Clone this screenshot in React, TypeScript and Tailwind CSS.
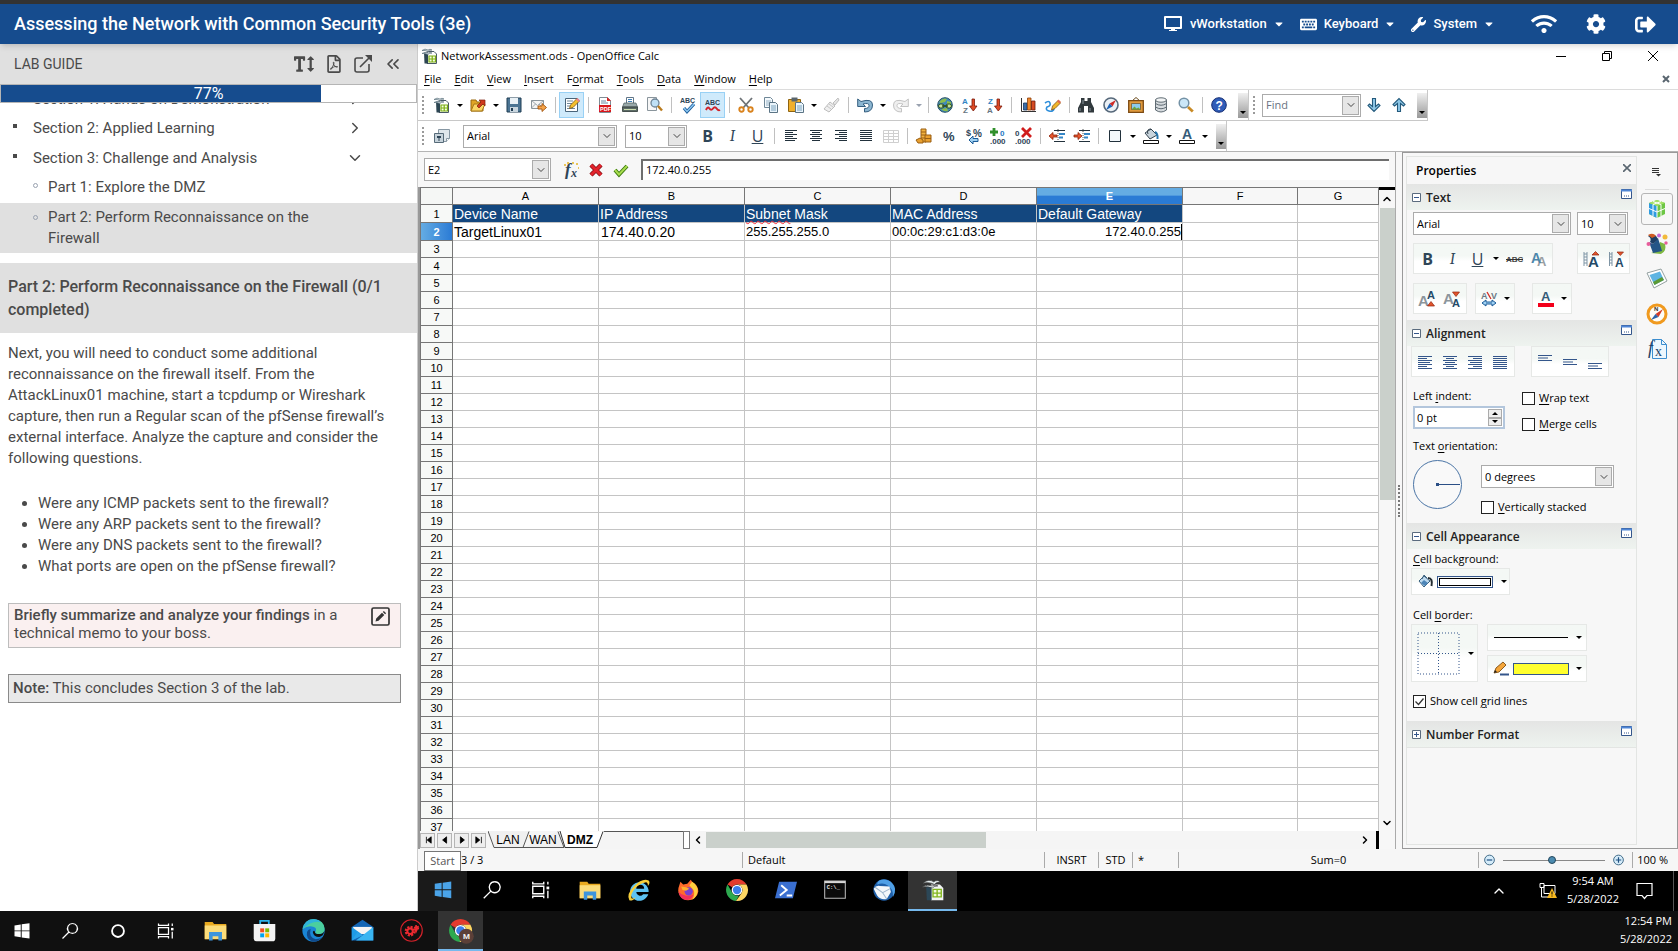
// src/App.tsx

import type { ReactNode } from 'react';
import { FaCaretDown, FaCog, FaKeyboard, FaRegFilePdf, FaSignOutAlt, FaTextHeight, FaWifi, FaWrench } from 'react-icons/fa';
import { ChevronDown, ChevronRight, ChevronsLeft } from 'lucide-react';

const NAVY = '#2f4557';

const lines = (rows: number[][], color: string, gap = 2) =>
  rows.map(([x, w], i) => <rect key={i} x={x} y={2 + i * gap} width={w} height="1" fill={color} />);

// Drawings on a 16 x 16 board
const ICONS: Record<string, ReactNode> = {
  calc: (
    <>
      <path d="M5 3.500h7l2.500 2.500v9.500H5z" fill="#fdfdfd" stroke="#4a5a66" />
      <path d="M2 4.500h4V15.500H2.500z" fill="#2c4552" />
      <path d="M0 2.500q3-2.500 6-.5 2-1.500 4 0-3 0-4 1.500Q3 2 0 2.500zM0 5.500q3-2 6-.5 2-1 4 0-3 0-4 1.500Q3 5 0 5.500z" fill="#dfe8ec" stroke="#5e7480" strokeWidth=".7" />
      <path d="M7 8h6.500v6H7zM10.200 8v6M7 11h6.500" fill="#f4ffe0" stroke="#7cae13" strokeWidth="1.200" />
    </>
  ),
  open: (
    <>
      <path d="M1 14V3h5l1 2h6v9z" fill="#e0a526" stroke="#9a6a10" />
      <path d="M1 14l3-7h11l-3 7z" fill="#fbd766" stroke="#a87818" />
      <path d="M7 9l4-4-2-2h6v6l-2-2-4 4z" fill="#cf3a1c" stroke="#7d1d0b" strokeWidth=".7" />
    </>
  ),
  save: (
    <>
      <path d="M1 1h14v14H1z" fill="#4b7493" stroke="#1f3c52" />
      <path d="M4 1h8v6H4z" fill="#e9f1f6" />
      <path d="M4 10h8v5H4z" fill="#c9d6df" />
      <path d="M5 11h2v3H5z" fill="#1f3c52" />
    </>
  ),
  mail: (
    <>
      <path d="M.5 3.500h12v8H.5z" fill="#f4f4f4" stroke="#8a949b" />
      <path d="M.5 3.500l6 5 6-5M.5 11l4-4M12 11L8 7" fill="none" stroke="#8a949b" strokeWidth=".8" />
      <path d="M7 9h4V6.500l4.500 4-4.500 4V12H7z" fill="#f5a44a" stroke="#a3540b" strokeWidth=".9" />
    </>
  ),
  edit: (
    <>
      <path d="M1.500 1.500h12v13h-12z" fill="#fff" stroke="#48647a" />
      <path d="M3 4h6M3 6.500h5M3 9h3M3 11.500h8" stroke="#6f8798" />
      <path d="M5.500 11.500l1-3.500L13 1.500l2.500 2.500L9 10.500z" fill="#f5c02c" stroke="#7a5313" strokeWidth=".8" />
      <path d="M12 2.500L13.500 1 16 3.500 14.500 5z" fill="#e98291" />
    </>
  ),
  pdf: (
    <>
      <path d="M2.500.5h8l3 3v12h-11z" fill="#fff" stroke="#7f8c95" />
      <path d="M10 0l4 4h-4z" fill="#d22" />
      <path d="M4 4h5M4 6h7" stroke="#6b88a2" />
      <path d="M2 8h12v7H2z" fill="#d8161b" />
      <text x="3" y="13.700" fontSize="5.500" fontWeight="700" fill="#fff" fontFamily="Liberation Sans">PDF</text>
    </>
  ),
  print: (
    <>
      <path d="M4.500.5h7v7h-7z" fill="#fff" stroke="#617587" />
      <path d="M6 2.500h4M6 4.500h4" stroke="#3d7fb5" />
      <path d="M2 6h12l1.500 4H.5z" fill="#9aa9a9" stroke="#4c5c5c" strokeWidth=".7" />
      <path d="M.5 10h15v4.500H.5z" fill="#5d6c66" stroke="#2d3935" strokeWidth=".8" />
      <path d="M2 12.500h12" stroke="#cfe0b0" />
    </>
  ),
  preview: (
    <>
      <path d="M.5.5h9v13h-9z" fill="#f7f7f7" stroke="#8a959c" />
      <circle cx="8" cy="6" r="4" fill="#bfe0f5" stroke="#6d8496" strokeWidth="1.300" />
      <path d="M11 9l4 4.500" stroke="#b97a1c" strokeWidth="2.400" />
    </>
  ),
  spell: (
    <>
      <text x="0" y="6" fontSize="7" fontWeight="700" fill={NAVY} fontFamily="Liberation Sans">ABC</text>
      <path d="M4 11l3 3.500L14 7" fill="none" stroke="#1d5e9c" strokeWidth="3.200" />
      <path d="M4 11l3 3.500L14 7" fill="none" stroke="#8ec8f2" strokeWidth="1.400" />
    </>
  ),
  auto: (
    <>
      <text x="0" y="8" fontSize="7" fontWeight="700" fill={NAVY} fontFamily="Liberation Sans">ABC</text>
      <path d="M1 13q1.700-4 3.400-1.500t3.600 0t3.600 0T15 13" fill="none" stroke="#d2232a" strokeWidth="2" />
    </>
  ),
  cut: (
    <>
      <path d="M2 1l9 10M14 1L5 11" stroke="#6d7276" strokeWidth="1.800" />
      <circle cx="3.500" cy="12.500" r="2.200" fill="none" stroke="#d9821c" strokeWidth="1.900" />
      <circle cx="12.500" cy="12.500" r="2.200" fill="none" stroke="#d9821c" strokeWidth="1.900" />
    </>
  ),
  copy: (
    <>
      <path d="M1.500.5h6l2 2v8h-8z" fill="#f5fafd" stroke="#6f8797" />
      <path d="M3 4h5M3 6h5M3 8h5" stroke="#94b0c4" />
      <path d="M6.500 5.500h6l2 2v8h-8z" fill="#eaf5fc" stroke="#5b7485" />
      <path d="M8 9h5M8 11h5M8 13h5" stroke="#7ba2bd" />
    </>
  ),
  paste: (
    <>
      <path d="M.5 2.500h12v12H.5z" fill="#efaf2c" stroke="#8f6410" />
      <path d="M3.500.5h6v4h-6z" fill="#59656c" />
      <path d="M7.500 5.500h6l2 2v8h-8z" fill="#eaf5fc" stroke="#5b7485" />
      <path d="M9 9h5M9 11h5M9 13h5" stroke="#7ba2bd" />
    </>
  ),
  brush: (
    <>
      <path d="M14 1l1 2-4 5-2-2z" fill="#e5e5e5" stroke="#c0c0c0" />
      <path d="M6 5l5 4-6 6-5-3z" fill="#efefef" stroke="#bdbdbd" />
      <path d="M3 9l4 3M5 7l4 3" stroke="#c6c6c6" />
    </>
  ),
  undo: (
    <path d="M.7 2v7.500H8.500L6 7q6-1.500 6 1.500T7.500 11.500V15q8 0 8-7T4 4.500z" fill="#8cb6d1" stroke="#355f80" strokeWidth="1" />
  ),
  redo: (
    <path d="M15.300 2v7.500H7.500L10 7Q4 5.500 4 8.500t4.500 3V15q-8 0-8-7T12 4.500z" fill="#efefef" stroke="#c3c3c3" strokeWidth="1" />
  ),
  web: (
    <>
      <circle cx="8" cy="8" r="7.300" fill="#3f89bb" stroke="#275064" />
      <path d="M2 5q4-5 8-3l-2 3-4 1zM10 4l4 1v4l-4-2zM4 12l6-1 1 3q-4 1-7-2z" fill="#8dbd4c" />
      <rect x="1.500" y="7" width="5.500" height="4" rx="2" fill="#c3e19a" stroke="#2b4d1e" />
      <rect x="9" y="7" width="5.500" height="4" rx="2" fill="#c3e19a" stroke="#2b4d1e" />
      <path d="M5 9h6" stroke="#2b4d1e" strokeWidth="1.500" />
    </>
  ),
  az: (
    <>
      <text x="0" y="7" fontSize="8" fontWeight="700" fill="#3385c4" fontFamily="Liberation Sans">A</text>
      <text x="1" y="15.500" fontSize="8" fontWeight="700" fill="#66757f" fontFamily="Liberation Sans">Z</text>
      <path d="M10 2h2.500v7H15l-3.700 5L7.500 9H10z" fill="#dd4a25" stroke="#7b1b0a" strokeWidth=".8" />
    </>
  ),
  za: (
    <>
      <text x="1" y="7" fontSize="8" fontWeight="700" fill="#3385c4" fontFamily="Liberation Sans">Z</text>
      <text x="0" y="15.500" fontSize="8" fontWeight="700" fill="#66757f" fontFamily="Liberation Sans">A</text>
      <path d="M10 2h2.500v7H15l-3.700 5L7.500 9H10z" fill="#dd4a25" stroke="#7b1b0a" strokeWidth=".8" />
    </>
  ),
  chart: (
    <>
      <path d="M1.500 1v13.500H16" fill="none" stroke="#333" />
      <path d="M3.500 6h3.500v7H3.500z" fill="#3c6ea9" stroke="#16375f" strokeWidth=".8" />
      <path d="M7.500 1h3.500v12H7.500z" fill="#f0872a" stroke="#8c3d0a" strokeWidth=".8" />
      <path d="M11.500 4h3.500v9h-3.500z" fill="#d64a22" stroke="#6d1d0b" strokeWidth=".8" />
    </>
  ),
  draw: (
    <>
      <path d="M0 6q4-3 5 0t-3 4q-2 3 2 4t5-2" fill="none" stroke="#2d8edb" strokeWidth="1.600" />
      <path d="M6.500 13l1-4L13 3.500 15.500 6 10 11.500z" fill="#f2b62a" stroke="#80531a" strokeWidth=".8" />
      <path d="M12 4.500l1.500-2L16 5l-1.500 1.500z" fill="#e06a4f" />
    </>
  ),
  find: (
    <>
      <path d="M3 1h3.500v3h3V1H13v4l3 6v4.500h-6V9H6v6.500H0V11l3-6z" fill="#31393d" />
      <path d="M2 11v3M12 11v3M5 3v4" stroke="#8b979e" />
    </>
  ),
  compass: (
    <>
      <circle cx="8" cy="8" r="7" fill="#eaf0f5" stroke="#56687a" strokeWidth="1.600" />
      <path d="M13 3L9.500 9.500 6.500 6.500z" fill="#cf2b26" />
      <path d="M3 13l3.500-6.500 3 3z" fill="#1c62b6" />
    </>
  ),
  gallery: (
    <>
      <path d="M4 4l4-3.500L12 4" fill="none" stroke="#6a4a1b" />
      <path d="M.7 3.700h14.600v11.600H.7z" fill="#e19a3c" stroke="#7c4a12" strokeWidth="1.300" />
      <path d="M3.500 6.500h9v6h-9z" fill="#8ccbec" stroke="#5e3d12" strokeWidth=".6" />
      <path d="M3.500 12.500l3-3 2 2 2-1 2 2z" fill="#6ea53a" />
    </>
  ),
  db: (
    <>
      <path d="M2.500 3v10q5.500 4 11 0V3z" fill="#d5dade" stroke="#5f6b73" />
      <ellipse cx="8" cy="3" rx="5.500" ry="2.200" fill="#f2f4f5" stroke="#5f6b73" />
      <path d="M2.500 6.500q5.500 3.500 11 0M2.500 10q5.500 3.500 11 0" fill="none" stroke="#5f6b73" />
    </>
  ),
  zoom: (
    <>
      <circle cx="6" cy="6" r="4.800" fill="#cbe7f8" stroke="#7391a5" strokeWidth="1.500" />
      <path d="M10 10l4.800 4.500" stroke="#c88a25" strokeWidth="2.800" />
    </>
  ),
  help: (
    <>
      <circle cx="8" cy="8" r="7.300" fill="#2f5cb8" stroke="#142d73" />
      <text x="4.500" y="12.500" fontSize="12" fontWeight="700" fill="#fff" fontFamily="Liberation Sans">?</text>
    </>
  ),
  styles: (
    <>
      <path d="M4.500 1.500h11v9l-3 3h-8z" fill="#dfe6eb" stroke="#8797a3" />
      <path d="M12.500 13.500v-3h3" fill="#fff" stroke="#8797a3" />
      <path d="M.5 5.500h9v9h-9z" fill="#c6d2da" stroke="#566a78" />
      <path d="M3 8h4v2H5.500v3h-1v-3H3z" fill="#2f4557" />
    </>
  ),
  left: lines([[2, 12], [2, 8], [2, 12], [2, 8], [2, 12], [2, 10]], '#22313c'),
  center: lines([[2, 12], [4, 8], [2, 12], [4, 8], [2, 12], [4, 8]], '#22313c'),
  right: lines([[2, 12], [6, 8], [2, 12], [6, 8], [2, 12], [6, 8]], '#22313c'),
  justify: lines([[2, 12], [2, 12], [2, 12], [2, 12], [2, 12], [2, 12]], '#22313c'),
  merge: (
    <path d="M.5 2.500h15v12H.5zM.5 5.500h15M.5 8.500h15M.5 11.500h15M5.500 2.500v12M10.500 2.500v12" fill="none" stroke="#cfcfcf" />
  ),
  coins: (
    <>
      <path d="M5 1h5v13H5z" fill="#f1b23e" stroke="#9a5f12" />
      <path d="M5 4h5M5 7h5M5 10h5" stroke="#9a5f12" />
      <path d="M0 12l4-2 3 2v3H2zM9 7h6v7H9z" fill="#e9a02f" stroke="#9a5f12" />
      <path d="M9 10.500h6" stroke="#9a5f12" />
    </>
  ),
  percent: (
    <text x="2" y="13" fontSize="13" fontWeight="700" fill={NAVY} fontFamily="Liberation Sans">%</text>
  ),
  currency: (
    <>
      <text x="0" y="7.500" fontSize="9" fontWeight="700" fill={NAVY} fontFamily="Liberation Sans">$</text>
      <text x="7" y="8.500" fontSize="10" fontWeight="700" fill={NAVY} fontFamily="Liberation Sans">%</text>
      <path d="M3 12l4-4v2.500h5v3H7V16z" fill="#9fd0f2" stroke="#1b5b97" />
    </>
  ),
  addDec: (
    <>
      <path d="M3 0v8M-1 4h8" stroke="#31902b" strokeWidth="2.800" />
      <text x="9" y="8" fontSize="8" fontWeight="700" fill="#2577c2" fontFamily="Liberation Sans">0</text>
      <text x="-1" y="16" fontSize="8" fontWeight="700" fill={NAVY} fontFamily="Liberation Sans">.000</text>
    </>
  ),
  delDec: (
    <>
      <text x="-1" y="8" fontSize="8" fontWeight="700" fill={NAVY} fontFamily="Liberation Sans">0</text>
      <path d="M6 0l9 9M15 0L6 9" stroke="#d01c1c" strokeWidth="2.800" />
      <text x="-1" y="16" fontSize="8" fontWeight="700" fill={NAVY} fontFamily="Liberation Sans">.000</text>
    </>
  ),
  outdent: (
    <>
      <path d="M9 1v14" stroke="#555" strokeDasharray="1 1" />
      <path d="M5 2.500h11M5 13.500h11" stroke="#22313c" />
      <path d="M10 6h6M10 9.500h4" stroke="#3587c7" strokeWidth="2" />
      <path d="M0 8l4-3.500V7h4v2H4v2.500z" fill="#e8572e" stroke="#8c2109" strokeWidth=".8" />
    </>
  ),
  indent: (
    <>
      <path d="M9 1v14" stroke="#555" strokeDasharray="1 1" />
      <path d="M5 2.500h11M5 13.500h11" stroke="#22313c" />
      <path d="M10 6h6M10 9.500h4" stroke="#3587c7" strokeWidth="2" />
      <path d="M8 8L4 4.500V7H0v2h4v2.500z" fill="#e8572e" stroke="#8c2109" strokeWidth=".8" />
    </>
  ),
  frame: <path d="M2.500 2.500h11v11h-11z" fill="#f3f8fb" stroke="#22313c" />,
  fill: (
    <>
      <path d="M2 5l6-4 6 6-7 4z" fill="#c8d4dc" stroke="#33424e" />
      <path d="M5 6q-2-5 3-5" fill="none" stroke="#33424e" />
      <path d="M12 4q3 1 2.500 7" fill="none" stroke="#2776ad" strokeWidth="2" />
      <path d="M.5 12.500h15v3H.5z" fill="#fff" stroke="#111" />
    </>
  ),
  fontColor: (
    <>
      <text x="3" y="11" fontSize="14" fontWeight="700" fill="#355b78" fontFamily="Liberation Sans">A</text>
      <path d="M.5 12.500h15v3H.5z" fill="#fff" stroke="#111" />
    </>
  ),
  fontRed: (
    <>
      <text x="3" y="10" fontSize="13" fontWeight="700" fill="#355b78" fontFamily="Liberation Sans">A</text>
      <path d="M0 12h16v4H0z" fill="#f3001b" />
    </>
  ),
  fx: (
    <>
      <text x="2" y="13" fontSize="17" fontStyle="italic" fontWeight="700" fill={NAVY} fontFamily="Liberation Serif">f</text>
      <text x="8" y="15" fontSize="12" fontStyle="italic" fontWeight="700" fill={NAVY} fontFamily="Liberation Serif">x</text>
      <path d="M1 3h2M4 1h2M9 1h2M13 2h2M15 6h1" stroke="#e8b623" strokeWidth="1.500" />
    </>
  ),
  cancel: (
    <>
      <path d="M3 3l10 10M13 3L3 13" stroke="#7f0f14" strokeWidth="4.500" />
      <path d="M3 3l10 10M13 3L3 13" stroke="#e2232c" strokeWidth="3" />
    </>
  ),
  accept: (
    <>
      <path d="M2 8l4 4.500L14 4" fill="none" stroke="#3c7b0f" strokeWidth="4" />
      <path d="M2 8l4 4.500L14 4" fill="none" stroke="#a8dc4e" strokeWidth="2" />
    </>
  ),
  down: <path d="M6.500 1.500h3v8l3-2.500 1.500 1.500L8 14.500 2 8.500 3.500 7l3 2.500z" fill="#8ec8e8" stroke="#245a7c" strokeWidth="1.100" />,
  up: <path d="M6.500 14.500h3v-8l3 2.500L14 7.500 8 1.500 2 7.500 3.500 9l3-2.500z" fill="#8ec8e8" stroke="#245a7c" strokeWidth="1.100" />,
  strike: (
    <>
      <text x="0" y="10.500" fontSize="8" fontWeight="700" fill="#444" fontFamily="Liberation Sans">ABC</text>
      <path d="M0 8.500h17" stroke="#333" />
    </>
  ),
  shadow: (
    <>
      <text x="6" y="15" fontSize="13" fontWeight="700" fill="#9a9fa3" fontFamily="Liberation Sans">A</text>
      <text x="0" y="12" fontSize="14" fontWeight="700" fill="#4d87ab" fontFamily="Liberation Sans">A</text>
    </>
  ),
  grow: (
    <>
      <path d="M1 1v14M4 1v14M1 3h3M1 6h3M1 9h3M1 12h3" fill="none" stroke="#7f95a5" />
      <text x="5" y="15.500" fontSize="15" fontWeight="700" fill="#244a68" fontFamily="Liberation Sans">A</text>
      <path d="M9 4l3.500-3.500L16 4z" fill="#e2552d" stroke="#8f240d" strokeWidth=".7" />
    </>
  ),
  shrink: (
    <>
      <path d="M1.500 1v14M4 1v14M1.500 3H4M1.500 6H4M1.500 9H4M1.500 12H4" fill="none" stroke="#7f95a5" />
      <text x="7" y="15.500" fontSize="12" fontWeight="700" fill="#244a68" fontFamily="Liberation Sans">A</text>
      <path d="M9 1h6.500l-3.200 3.500z" fill="#e2552d" stroke="#8f240d" strokeWidth=".7" />
    </>
  ),
  sup: (
    <>
      <text x="-1" y="14.500" fontSize="15" fontWeight="700" fill="#8c959c" fontFamily="Liberation Sans">A</text>
      <text x="8" y="8" fontSize="11" fontWeight="700" fill="#244a68" fontFamily="Liberation Sans">A</text>
      <path d="M8.500 15l3.500-4.500 3.500 4.500z" fill="#e2552d" stroke="#8f240d" strokeWidth=".7" />
    </>
  ),
  sub: (
    <>
      <text x="-1" y="12.500" fontSize="15" fontWeight="700" fill="#8c959c" fontFamily="Liberation Sans">A</text>
      <text x="8" y="15.500" fontSize="11" fontWeight="700" fill="#244a68" fontFamily="Liberation Sans">A</text>
      <path d="M8.500 1h7l-3.500 4.500z" fill="#e2552d" stroke="#8f240d" strokeWidth=".7" />
    </>
  ),
  spacing: (
    <>
      <text x="0" y="8" fontSize="9" fontWeight="700" fill="#6b7a85" fontFamily="Liberation Sans">A</text>
      <text x="10" y="8" fontSize="9" fontWeight="700" fill="#6b7a85" fontFamily="Liberation Sans">V</text>
      <path d="M6 1l4 7" stroke="#d42a22" strokeWidth="1.300" />
      <path d="M1 12l4-3v2h6V9l4 3-4 3v-2H5v2z" fill="#9fd0f2" stroke="#1b5b97" />
    </>
  ),
  bLeft: lines([[1, 14], [1, 9], [1, 14], [1, 12], [1, 14], [1, 9], [1, 14]], '#34568b'),
  bCenter: lines([[1, 14], [4, 8], [1, 14], [3, 10], [1, 14], [4, 8], [1, 14]], '#34568b'),
  bRight: lines([[1, 14], [6, 9], [1, 14], [3, 12], [1, 14], [6, 9], [1, 14]], '#34568b'),
  bJustify: lines([[1, 14], [1, 14], [1, 14], [1, 14], [1, 14], [1, 14], [1, 14]], '#34568b'),
  vTop: <path d="M1 1.500h14M1 4h10M1 6.500h14" stroke="#34568b" />,
  vMid: <path d="M1 5.500h14M1 8h10M1 10.500h14" stroke="#34568b" />,
  vBottom: <path d="M1 9.500h14M1 12h10M1 14.500h14" stroke="#34568b" />,
  bucket: (
    <>
      <path d="M2 7l5-5 6 5-6 6z" fill="#bcd9ee" stroke="#3a617f" />
      <path d="M5 5l2-4 3 3" fill="none" stroke="#3a617f" />
      <path d="M11 4q5 0 3.500 8" fill="none" stroke="#222b31" strokeWidth="2" />
      <path d="M4 9l4 3 3-3-4-3z" fill="#4d86b8" />
    </>
  ),
  pencil: (
    <>
      <path d="M1 12l2-5L10 1l3 3-7 7z" fill="#f4a63a" stroke="#7d4e12" strokeWidth=".9" />
      <path d="M1 12l1-3 2 2z" fill="#222" />
      <path d="M7 12.500h9v2H7z" fill="#34568b" />
    </>
  ),
};

function Ico({ n, s = 'size-4' }: { n: string; s?: string }) {
  return (
    <svg viewBox="0 0 16 16" className={`${s} shrink-0 overflow-visible`} aria-hidden="true">
      {ICONS[n]}
    </svg>
  );
}

function Tool({ n, active = false }: { n: string; active?: boolean }) {
  return (
    <button
      type="button"
      aria-label={n}
      className={`flex h-[26px] w-[25px] shrink-0 items-center justify-center border ${active ? 'border-[#99d1f5] bg-[#cfeafb]' : 'border-transparent'}`}
    >
      <Ico n={n} />
    </button>
  );
}

function Letter({ children, className }: { children: ReactNode; className: string }) {
  return (
    <button type="button" className={`flex h-[26px] w-[25px] shrink-0 items-center justify-center text-base leading-4 text-[#2f4557] ${className}`}>
      {children}
    </button>
  );
}

function Drop({ muted = false }: { muted?: boolean }) {
  return (
    <button type="button" aria-label="More" className="flex h-6 w-[11px] shrink-0 items-center justify-center">
      <span className={`border-x-[3px] border-t-[3px] border-x-transparent ${muted ? 'border-t-gray-400' : 'border-t-black'}`} />
    </button>
  );
}

const Sep = () => (
  <span className="flex w-2 shrink-0 justify-center">
    <span className="h-4 w-px bg-[#c0c0c0]" />
  </span>
);

const Grip = () => <span className="ml-1 h-[18px] w-0 shrink-0 border-l-2 border-dotted border-[#9a9a9a]" />;

const EndCap = () => (
  <span className="flex h-[25px] w-[10px] shrink-0 items-end justify-center bg-linear-to-b from-[#f0f0f0] to-[#9a9a9a] pb-1">
    <span className="border-x-[3px] border-t-[3px] border-x-transparent border-t-black" />
  </span>
);

function Combo({ label, value, className, gray = false }: { label: string; value: string; className: string; gray?: boolean }) {
  return (
    <span className={`relative block h-[23px] shrink-0 ${className}`}>
      <select
        aria-label={label}
        className={`size-full appearance-none border border-[#ababab] bg-white pl-[3px] ${gray ? 'text-gray-500' : 'text-black'}`}
      >
        <option>{value}</option>
      </select>
      <span className="pointer-events-none absolute inset-y-[2px] right-[2px] flex w-[17px] items-center justify-center border border-[#ababab] bg-[#e6e6e6]">
        <ChevronDown className="size-3 text-[#444]" />
      </span>
    </span>
  );
}

function Accel({ text, at = 0 }: { text: string; at?: number }) {
  return (
    <>
      {text.slice(0, at)}
      <span className="underline underline-offset-2">{text[at]}</span>
      {text.slice(at + 1)}
    </>
  );
}

/* ---------- top bar ---------- */

const headerMenus = [
  {
    name: 'vWorkstation',
    icon: (
      <svg viewBox="0 0 20 16" className="h-4 w-5">
        <path d="M2 1h16v11H2z" fill="none" stroke="#fff" strokeWidth="2" strokeLinejoin="round" />
        <path d="M8 12h4v2h2v1H6v-1h2z" fill="#fff" />
      </svg>
    ),
  },
  { name: 'Keyboard', icon: <FaKeyboard className="size-[17px]" /> },
  { name: 'System', icon: <FaWrench className="size-[15px]" /> },
];

function Header() {
  return (
    <header className="relative z-10 flex h-11 shrink-0 items-center border-t-4 border-[#333] bg-[#164c8e] pr-[22px] pl-[14px] text-white shadow-md">
      <h1 className="text-lg leading-6 font-medium">Assessing the Network with Common Security Tools (3e)</h1>
      <nav className="ml-auto flex items-center gap-[15px] text-[13px] font-medium">
        {headerMenus.map((m) => (
          <button key={m.name} type="button" className="flex items-center">
            {m.icon}
            <span className="ml-[7px]">{m.name}</span>
            <FaCaretDown className="ml-[6px] size-3" />
          </button>
        ))}
      </nav>
      <div className="ml-9 flex items-center gap-[29px]">
        <button type="button" aria-label="Connection"><FaWifi className="size-[26px]" /></button>
        <button type="button" aria-label="Settings"><FaCog className="size-5" /></button>
        <button type="button" aria-label="Exit"><FaSignOutAlt className="size-[21px]" /></button>
      </div>
    </header>
  );
}

/* ---------- lab guide ---------- */

const questions = [
  'Were any ICMP packets sent to the firewall?',
  'Were any ARP packets sent to the firewall?',
  'Were any DNS packets sent to the firewall?',
  'What ports are open on the pfSense firewall?',
];

function LabGuide() {
  return (
    <aside className="flex w-[418px] shrink-0 flex-col overflow-hidden border-r border-[#ccc] bg-white text-[15px] leading-[21px] text-[#4a4a4a]">
      <div className="flex h-10 shrink-0 items-center bg-[#e0e0e0] pr-[14px] pl-[14px]">
        <h2 className="text-sm">LAB GUIDE</h2>
        <div className="ml-auto flex items-center gap-[11px]">
          <button type="button" aria-label="Text size"><FaTextHeight className="size-5" /></button>
          <button type="button" aria-label="Export PDF"><FaRegFilePdf className="size-[18px]" /></button>
          <button type="button" aria-label="Open in new window">
            <svg viewBox="0 0 18 18" className="size-[18px]" fill="none" stroke="#4a4a4a" strokeWidth="1.600">
              <path d="M9 3H3q-2 0-2 2v10q0 2 2 2h10q2 0 2-2V9M6 12L16 2" />
              <path d="M11 0h7v7z" fill="#4a4a4a" stroke="none" />
            </svg>
          </button>
          <button type="button" aria-label="Collapse"><ChevronsLeft className="size-5" /></button>
        </div>
      </div>
      <div className="relative h-[19px] shrink-0 border border-[#b5b5b5] bg-white">
        <div className="h-full bg-[#164c8e]" style={{ width: '77%' }} />
        <span className="absolute inset-0 flex items-center justify-center text-base text-white">77%</span>
      </div>

      <div className="flex-1 overflow-hidden">
        <ul className="-mt-[18px]">
          {['Section 1: Hands-on Demonstration', 'Section 2: Applied Learning', 'Section 3: Challenge and Analysis'].map((s, i) => (
            <li key={s} className={`flex items-center pr-[53px] pl-[13px] ${i === 0 ? 'h-7' : 'h-[30px]'}`}>
              <span className="mb-1 size-1 bg-[#4a4a4a]" />
              <a href="#" className="ml-4">{s}</a>
              {i < 2 ? <ChevronRight className="ml-auto size-[18px]" /> : <ChevronDown className="ml-auto size-[18px]" />}
            </li>
          ))}
          <li className="flex h-[30px] items-center pb-px pl-[33px]">
            <span className="mb-1 size-[5px] rounded-full border border-gray-400" />
            <a href="#" className="ml-[10px]">Part 1: Explore the DMZ</a>
          </li>
          <li className="flex bg-[#e0e0e0] py-1 pr-[80px] pl-[33px]">
            <span className="mt-2 size-[5px] shrink-0 rounded-full border border-gray-400" />
            <a href="#" className="ml-[10px]">Part 2: Perform Reconnaissance on the Firewall</a>
          </li>
        </ul>

        <h3 className="mt-[10px] bg-[#e0e0e0] px-2 py-3 text-base leading-[23px] font-medium">
          Part 2: Perform Reconnaissance on the Firewall (0/1 completed)
        </h3>
        <p className="mt-[10px] pr-6 pl-2">
          Next, you will need to conduct some additional reconnaissance on the firewall itself. From the AttackLinux01
          machine, start a tcpdump or Wireshark capture, then run a Regular scan of the pfSense firewall’s external
          interface. Analyze the capture and consider the following questions.
        </p>
        <ul className="mt-6 list-disc pl-[38px]">
          {questions.map((q) => (
            <li key={q}>{q}</li>
          ))}
        </ul>
        <div className="mt-[26px] mr-4 ml-2 flex border border-[#bdbdbd] bg-[#faf0f0] pt-[2px] pr-[10px] pb-[5px] pl-[5px] leading-[18px]">
          <p className="flex-1 pr-8">
            <b className="font-medium">Briefly summarize and analyze your findings</b> in a technical memo to your boss.
          </p>
          <button type="button" aria-label="Write answer" className="flex h-5 items-center">
            <svg viewBox="0 0 19 19" className="size-[19px]">
              <rect x="1" y="1" width="17" height="17" rx="1.500" fill="none" stroke="#333" strokeWidth="1.700" />
              <path d="M4.500 14.500l.7-3L11 5.700l2.300 2.300-5.800 5.800zM11.800 5l1.100-1 2.200 2.200-1 1z" fill="#333" />
            </svg>
          </button>
        </div>
        <p className="mt-[26px] mr-4 ml-2 border border-[#8a8a8a] bg-[#e9e9e9] px-1 py-[3px]">
          <b className="font-medium">Note:</b> This concludes Section 3 of the lab.
        </p>
      </div>
    </aside>
  );
}

/* ---------- spreadsheet window ---------- */

const menus: [string, number][] = [
  ['File', 0], ['Edit', 0], ['View', 0], ['Insert', 0], ['Format', 1], ['Tools', 0], ['Data', 0], ['Window', 0], ['Help', 0],
];

function TitleAndMenu() {
  return (
    <>
      <div className="flex h-6 shrink-0 items-center bg-white pr-5 pl-1">
        <Ico n="calc" />
        <span className="ml-[3px]">NetworkAssessment.ods - OpenOffice Calc</span>
        <div className="ml-auto flex items-center gap-9">
          <button type="button" aria-label="Minimize"><svg className="size-[10px]" viewBox="0 0 10 10"><path d="M0 5.500h10" stroke="#000" /></svg></button>
          <button type="button" aria-label="Restore"><svg className="size-[10px]" viewBox="0 0 10 10"><path d="M.5 2.500h7v7h-7zM2.500 2.500v-2h7v7h-2" fill="none" stroke="#000" /></svg></button>
          <button type="button" aria-label="Close"><svg className="size-[10px]" viewBox="0 0 10 10"><path d="M0 0l10 10M10 0L0 10" stroke="#000" /></svg></button>
        </div>
      </div>
      <div className="flex h-[22px] shrink-0 items-center gap-[13px] border-b border-[#dcdcdc] bg-white pr-2 pl-[6px]">
        {menus.map(([m, at]) => (
          <button key={m} type="button"><Accel text={m} at={at} /></button>
        ))}
        <button type="button" aria-label="Close document" className="ml-auto">
          <svg className="size-2" viewBox="0 0 8 8"><path d="M1 1l6 6M7 1L1 7" stroke="#5a6670" strokeWidth="2" /></svg>
        </button>
      </div>
    </>
  );
}

function Toolbars() {
  return (
    <>
      <div className="flex h-[31px] shrink-0">
        <div className="flex items-center border-r border-b border-[#c8c8c8]">
          <Grip />
          <span className="w-[5px]" />
          <Tool n="calc" /><Drop /><Tool n="open" /><Drop /><Tool n="save" /><Tool n="mail" /><Sep />
          <Tool n="edit" active /><Sep />
          <Tool n="pdf" /><Tool n="print" /><Tool n="preview" /><Sep />
          <Tool n="spell" /><Tool n="auto" active /><Sep />
          <Tool n="cut" /><Tool n="copy" /><Tool n="paste" /><Drop /><Tool n="brush" /><Sep />
          <Tool n="undo" /><Drop /><Tool n="redo" /><Drop muted /><Sep />
          <Tool n="web" /><Tool n="az" /><Tool n="za" /><Sep />
          <Tool n="chart" /><Tool n="draw" /><Sep />
          <Tool n="find" /><Tool n="compass" /><Tool n="gallery" /><Tool n="db" /><Tool n="zoom" /><Sep />
          <Tool n="help" />
          <span className="w-[7px]" />
          <EndCap />
        </div>
        <div className="flex items-center border-r border-b border-[#c8c8c8]">
          <Grip />
          <Combo label="Find" value="Find" gray className="ml-[7px] w-[99px]" />
          <Tool n="down" /><Tool n="up" />
          <span className="w-[6px]" />
          <EndCap />
        </div>
      </div>
      <div className="flex h-[31px] shrink-0 border-b border-[#b4b4b4]">
        <div className="flex items-center border-r border-[#c8c8c8]">
          <Grip />
          <span className="w-[5px]" />
          <Tool n="styles" />
          <Combo label="Font name" value="Arial" className="ml-[9px] w-[154px]" />
          <Combo label="Font size" value="10" className="mr-2 ml-2 w-[62px]" />
          <Letter className="font-bold">B</Letter>
          <Letter className="font-serif italic">I</Letter>
          <Letter className="underline">U</Letter><Sep />
          <Tool n="left" /><Tool n="center" /><Tool n="right" /><Tool n="justify" /><Tool n="merge" /><Sep />
          <Tool n="coins" /><Tool n="percent" /><Tool n="currency" /><Tool n="addDec" /><Tool n="delDec" /><Sep />
          <Tool n="outdent" /><Tool n="indent" /><Sep />
          <Tool n="frame" /><Drop /><Tool n="fill" /><Drop /><Tool n="fontColor" /><Drop />
          <span className="w-[6px]" />
          <EndCap />
        </div>
      </div>
    </>
  );
}

const cols = ['A', 'B', 'C', 'D', 'E', 'F', 'G'];
const headings = ['Device Name', 'IP Address', 'Subnet Mask', 'MAC Address', 'Default Gateway'];
const record = ['TargetLinux01', '174.40.0.20', '255.255.255.0', '00:0c:29:c1:d3:0e', '172.40.0.255'];
const cell = 'border-r border-b border-[#c4c4c4] p-0';

function Grid() {
  return (
    <table className="w-full table-fixed border-separate border-spacing-0 bg-white font-['Liberation_Sans',sans-serif] text-sm leading-4">
      <colgroup>
        <col className="w-[33px]" />
        <col className="w-[146px]" /><col className="w-[146px]" /><col className="w-[146px]" />
        <col className="w-[146px]" /><col className="w-[146px]" /><col className="w-[115px]" />
        <col />
      </colgroup>
      <thead className="text-[11px]">
        <tr className="h-[18px]">
          <th className="border border-[#767676] bg-[#f5f7f5] p-0" />
          {cols.map((c) => (
            <th
              key={c}
              className={`border-y border-r border-[#767676] p-0 ${c === 'E' ? 'bg-linear-to-b from-[#64ace3] from-45% to-[#2a7bd5] to-50% font-bold text-white' : 'bg-[#f7f7f7] font-normal'}`}
            >
              {c}
            </th>
          ))}
        </tr>
      </thead>
      <tbody>
        {Array.from({ length: 37 }, (_, i) => i + 1).map((r) => (
          <tr key={r} className={r < 3 ? 'h-[18px]' : 'h-[17px]'}>
            <th
              scope="row"
              className={`border-x border-b border-[#767676] p-0 text-[11px] leading-[14px] ${r === 2 ? 'bg-linear-to-r from-[#64ace3] to-[#2a7bd5] font-bold text-white' : 'bg-[#f7f9f7] font-normal'}`}
            >
              {r}
            </th>
            {cols.map((c, k) => {
              if (r === 1 && k < 5)
                return (
                  <td key={c} className={`${cell} bg-[#13477f] pl-px text-white`}>
                    {k === 2 ? <><span className="underline decoration-red-500 decoration-wavy decoration-1">Subnet</span> Mask</> : headings[k]}
                  </td>
                );
              if (r === 2 && k < 5)
                return (
                  <td key={c} className={`${cell} leading-4 ${k > 1 ? 'text-[13px]' : ''} ${k === 1 ? 'pl-[2px]' : 'pl-px'} ${k === 4 ? 'text-right' : ''}`}>
                    {k === 4 ? <span className="inline-block h-4 border-r border-black">{record[k]}</span> : record[k]}
                  </td>
                );
              return <td key={c} className={cell} />;
            })}
          </tr>
        ))}
      </tbody>
    </table>
  );
}

const navArrows = ['M3 1v8M9 1v8L4 5z', 'M7 1v8L2 5z', 'M3 1v8l5-4z', 'M1 1v8l5-4zM8 1v8'];

function SheetTabs() {
  return (
    <div className="flex h-[18px] shrink-0 items-stretch bg-[#f5f5f5]">
      <div className="flex items-center gap-[2px]">
        {navArrows.map((d) => (
          <button key={d} type="button" aria-label="Sheet navigation" className="flex size-[15px] items-center justify-center border border-[#b5b5b5] bg-[#eee]">
            <svg viewBox="0 0 10 10" className="size-2"><path d={d} fill="#000" stroke="#000" /></svg>
          </button>
        ))}
      </div>
      <div className="relative ml-[2px] h-[18px] w-[116px]">
        <svg viewBox="0 0 116 18" className="absolute inset-0 h-[18px] w-[116px]">
          <path d="M0 0l6 16.500h29l6-16M35 16.500h41L70 .5" fill="#f0f0f0" stroke="#555" />
          <path d="M72 0l5 16.500h32l6-16" fill="#fff" stroke="#333" />
        </svg>
        <div className="relative flex h-[17px] items-center pl-1 text-xs">
          <button type="button" className="w-8 font-['Liberation_Sans',sans-serif]">LAN</button>
          <button type="button" className="w-[38px] font-['Liberation_Sans',sans-serif]">WAN</button>
          <button type="button" className="w-9 font-['Liberation_Sans',sans-serif] font-bold">DMZ</button>
        </div>
      </div>
      <div className="w-[79px] border-t border-[#555]" />
      <div className="w-[7px] border border-[#777] bg-white" />
      <div className="flex w-4 items-center justify-center"><ChevronRight className="size-3 rotate-180" strokeWidth={3} /></div>
      <div className="my-px flex-1"><div className="h-full w-[43%] bg-[#cad0cb]" /></div>
      <div className="flex w-4 items-center justify-center"><ChevronRight className="size-3" strokeWidth={3} /></div>
      <div className="ml-[3px] w-[3px] bg-black" />
    </div>
  );
}

function SheetArea() {
  return (
    <div className="flex min-w-0 flex-1 flex-col border-r border-[#aaa] bg-[#f7f7f7]">
      <div className="flex h-[35px] shrink-0 items-center pr-[6px] pl-[6px]">
        <Combo label="Name box" value="E2" className="mr-[7px] w-[127px]" />
        <Tool n="fx" /><Tool n="cancel" /><Tool n="accept" />
        <input
          aria-label="Formula"
          defaultValue="172.40.0.255"
          className="ml-2 h-[21px] min-w-0 flex-1 border-t-2 border-l-2 border-[#6e6e6e] bg-white pb-[3px] pl-[3px]"
        />
      </div>
      <div className="flex min-h-0 flex-1 border-l-2 border-[#999]">
        <div className="flex min-w-0 flex-1 flex-col">
          <div className="min-h-0 flex-1 overflow-hidden"><Grid /></div>
          <SheetTabs />
        </div>
        <div className="flex w-4 flex-col items-center">
          <div className="h-[3px] w-full bg-black" />
          <ChevronDown className="my-[3px] size-3 rotate-180" strokeWidth={3} />
          <div className="w-[15px] flex-1"><div className="h-[48%] w-full bg-[#cad0cb]" /></div>
          <ChevronDown className="mb-5 size-3" strokeWidth={3} />
        </div>
      </div>
    </div>
  );
}

function SectionHead({ title, open = true }: { title: string; open?: boolean }) {
  return (
    <div className="flex h-[26px] shrink-0 items-center bg-linear-to-b from-[#e4e5e4] to-[#eef3ef] pr-1 pl-[5px]">
      <button type="button" aria-label={`Toggle ${title}`}>
        <svg viewBox="0 0 9 9" className="size-[9px]">
          <path d="M.5.5h8v8h-8z" fill="#fff" stroke="#5a6b7e" />
          <path d={open ? 'M2 4.500h5' : 'M2 4.500h5M4.500 2v5'} stroke="#34568b" />
        </svg>
      </button>
      <h4 className="mt-px ml-[5px] text-xs font-semibold text-[#222]">{title}</h4>
      <button type="button" aria-label={`${title} options`} className="mb-[6px] ml-auto">
        <svg viewBox="0 0 11 10" className="h-[10px] w-[11px]">
          <path d="M.5.5h10v9H.5z" fill="#fff" stroke="#34568b" />
          <path d="M0 1.500h11" stroke="#4f86d6" strokeWidth="2" />
          <path d="M3 7h1M5 7h1M7 7h1" stroke="#34568b" />
        </svg>
      </button>
    </div>
  );
}

function Group({ children, className = 'h-[31px]' }: { children: ReactNode; className?: string }) {
  return <div className={`flex items-center border border-[#e6e8e6] bg-linear-to-b from-[#f4f8f5] from-40% to-white to-60% ${className}`}>{children}</div>;
}

function Check({ text, at = 0, checked = false, className = '' }: { text: string; at?: number; checked?: boolean; className?: string }) {
  return (
    <label className={`flex items-center gap-1 ${className}`}>
      <span className="relative flex size-[13px]">
        <input type="checkbox" defaultChecked={checked} className="peer size-[13px] appearance-none border border-[#222] bg-white" />
        <svg viewBox="0 0 13 13" className="pointer-events-none absolute inset-0 hidden size-[13px] peer-checked:block">
          <path d="M2.500 6.500l3 3 5-6" fill="none" stroke="#333" strokeWidth="1.300" />
        </svg>
      </span>
      <span><Accel text={text} at={at} /></span>
    </label>
  );
}

function Properties() {
  return (
    <div className="my-[3px] ml-[3px] flex flex-1 flex-col border border-[#e3e5e3] bg-[#f7f7f7]">
      <div className="flex h-[27px] shrink-0 items-center pr-[5px] pl-[9px]">
        <h3 className="text-xs font-semibold">Properties</h3>
        <button type="button" aria-label="Close sidebar" className="mb-[6px] ml-auto">
          <svg className="size-2" viewBox="0 0 8 8"><path d="M0 0l8 8M8 0L0 8" stroke="#5a6670" strokeWidth="1.600" /></svg>
        </button>
      </div>

      <SectionHead title="Text" />
      <div className="flex h-[110px] shrink-0 flex-col pt-[2px] pl-[6px]">
        <div className="flex gap-[6px]">
          <Combo label="Sidebar font" value="Arial" className="w-[158px]" />
          <Combo label="Sidebar size" value="10" className="w-[51px]" />
        </div>
        <div className="mt-2 flex gap-6">
          <Group>
            <span className="w-px" /><Letter className="font-bold">B</Letter><Letter className="font-serif italic">I</Letter><Letter className="underline">U</Letter>
            <Drop /><Tool n="strike" /><Tool n="shadow" /><span className="w-px" />
          </Group>
          <Group><Tool n="grow" /><Tool n="shrink" /><span className="w-px" /></Group>
        </div>
        <div className="mt-[9px] flex">
          <Group><Tool n="sup" /><Tool n="sub" /><span className="w-[2px]" /></Group>
          <Group className="ml-2 h-[31px]"><Tool n="spacing" /><Drop /><span className="w-[2px]" /></Group>
          <Group className="ml-[17px] h-[31px]"><Tool n="fontRed" /><Drop /><span className="w-[2px]" /></Group>
        </div>
      </div>

      <SectionHead title="Alignment" />
      <div className="flex h-[177px] shrink-0 flex-col pl-1">
        <div className="flex gap-4">
          <Group><Tool n="bLeft" /><Tool n="bCenter" /><Tool n="bRight" /><Tool n="bJustify" /><span className="w-[2px]" /></Group>
          <Group><Tool n="vTop" /><Tool n="vMid" /><Tool n="vBottom" /><span className="w-px" /></Group>
        </div>
        <div className="mt-[10px] flex pl-[2px]">
          <div className="w-[109px]">
            <label htmlFor="indent" className="block leading-[18px]"><Accel text="Left indent:" at={5} /></label>
            <span className="relative mt-px block h-[23px] w-[92px]">
              <input id="indent" defaultValue="0 pt" className="size-full border-2 border-[#b3c6dc] bg-white pl-[2px]" />
              <span className="absolute top-[3px] right-[3px] bottom-[3px] flex w-[14px] flex-col">
                {['Increase', 'Decrease'].map((l) => (
                  <button key={l} type="button" aria-label={l} className="flex flex-1 items-center justify-center border border-[#ababab] bg-[#eee]">
                    <span className={`border-x-[3px] border-x-transparent ${l === 'Increase' ? 'border-b-[3px] border-b-black' : 'border-t-[3px] border-t-black'}`} />
                  </button>
                ))}
              </span>
            </span>
          </div>
          <div className="flex flex-col gap-2 pt-[2px]">
            <Check text="Wrap text" className="h-[18px]" />
            <Check text="Merge cells" className="h-[18px]" />
          </div>
        </div>
        <p className="mt-1 pl-[2px] leading-[18px]"><Accel text="Text orientation:" at={5} /></p>
        <div className="mt-[5px] flex gap-[19px] pl-[2px]">
          <svg viewBox="0 0 49 49" className="size-[49px]">
            <circle cx="24.500" cy="24.500" r="24" fill="#fff" fillOpacity=".3" stroke="#4a74a5" />
            <path d="M24 24.500h23" stroke="#2b4f86" />
            <path d="M23 23h3v3h-3z" fill="#2b4f86" />
          </svg>
          <div className="pt-[5px]">
            <Combo label="Degrees" value="0 degrees" className="w-[133px]" />
            <Check text="Vertically stacked" className="mt-[10px] h-[18px]" />
          </div>
        </div>
      </div>

      <SectionHead title="Cell Appearance" />
      <div className="flex h-[172px] shrink-0 flex-col pl-1">
        <p className="mt-px pl-[2px] leading-[18px]"><Accel text="Cell background:" /></p>
        <div className="flex">
          <Group className="h-[27px]">
            <Tool n="bucket" />
            <button type="button" aria-label="Background colour" className="h-3 w-14 border border-[#34568b] p-px"><span className="block size-full border border-black bg-white" /></button>
            <span className="w-[5px]" /><Drop />
          </Group>
        </div>
        <p className="mt-[11px] pl-[2px] leading-[18px]"><Accel text="Cell border:" at={5} /></p>
        <div className="flex gap-[9px]">
          <Group className="h-[58px] w-[67px]">
            <svg viewBox="0 0 43 43" className="ml-[5px] size-[43px] shrink-0">
              <path d="M1 1h41v41H1zM21.500 1v41M1 21.500h41" fill="none" stroke="#34568b" strokeDasharray="1 2" />
            </svg>
            <span className="w-[5px]" /><Drop />
          </Group>
          <div className="flex flex-col gap-1">
            <Group className="h-[27px]"><span className="mr-[5px] ml-[6px] h-px w-[74px] bg-black" /><Drop /><span className="w-[2px]" /></Group>
            <Group className="h-[27px]">
              <Tool n="pencil" />
              <button type="button" aria-label="Line colour" className="mr-1 h-3 w-14 border border-[#34568b] bg-[#ffff2e]" />
              <Drop />
            </Group>
          </div>
        </div>
        <Check text="Show cell grid lines" at={10} checked className="mt-[10px] h-[18px] pl-[2px]" />
      </div>

      <SectionHead title="Number Format" open={false} />
      <div className="border-t border-[#e3e5e3]" />
    </div>
  );
}

function SidebarTabs() {
  return (
    <div className="flex w-10 flex-col items-center gap-[3px] pt-[14px]">
      <button type="button" aria-label="Sidebar settings">
        <svg viewBox="0 0 10 10" className="size-[10px]"><path d="M0 1.500h7M0 3.500h7M0 5.500h7" stroke="#333" /><path d="M4 7h5L6.500 9.500z" fill="#333" /></svg>
      </button>
      <span className="mt-[9px] h-px w-6 bg-[#ddd]" />
      <button type="button" aria-label="Properties" className="flex size-8 items-center justify-center rounded-[3px] border border-[#b5b5b5]">
        <svg viewBox="0 0 20 20" className="size-5">
          <path d="M10 1l8 3v11l-8 4-8-4V4z" fill="#6cc644" />
          <path d="M2 4l8 3v12l-8-4z" fill="#2f9be0" />
          <path d="M2 4l8-3 8 3-8 3z" fill="#a5e267" />
          <path d="M10 7v12M2 9.500l8 3.500 8-3.500M6 5.500v11.500M14 5.500v11.500M6 2.500l8 3M14 2.500l-8 3" stroke="#fff" fill="none" />
        </svg>
      </button>
      <button type="button" aria-label="Styles" className="flex size-8 items-center justify-center">
        <svg viewBox="0 0 22 22" className="size-[22px]">
          <path d="M5 20q8-2 9-11l5 2q2 7-4 10z" fill="#7fb842" />
          <path d="M3 9l4 2 5-6 4 13-9 2z" fill="#245587" />
          <path d="M2 3q4-3 8 0l2 3-5 5-3-2q2-4-2-6z" fill="#1d3f66" />
          <path d="M2 2q5-3 8 1l-4 2z" fill="#cf5b23" />
          <circle cx="13" cy="2.500" r="2" fill="#c467d8" /><circle cx="19" cy="4" r="2.500" fill="#f2b93b" />
          <circle cx="2.500" cy="11" r="2" fill="#e85c9b" /><circle cx="20" cy="10" r="1.700" fill="#e85c9b" />
        </svg>
      </button>
      <button type="button" aria-label="Gallery" className="flex size-8 items-center justify-center">
        <svg viewBox="0 0 22 22" className="size-[22px]">
          <path d="M1 5l14-4 6 12-13 7z" fill="#fff" stroke="#93a0a0" />
          <path d="M3.500 7l10.500-3.500 4 8.500-9.500 5z" fill="#5db4e2" />
          <path d="M7 14l9-5 2 3-9.500 5z" fill="#5c9a35" />
        </svg>
      </button>
      <button type="button" aria-label="Navigator" className="flex size-8 items-center justify-center">
        <svg viewBox="0 0 22 22" className="size-[22px]">
          <circle cx="11" cy="11" r="9" fill="#fdfdf7" stroke="#f09a1f" strokeWidth="3" />
          <text x="8" y="8" fontSize="6" fontWeight="700" fill="#333" fontFamily="Liberation Sans">N</text>
          <path d="M17 6l-4.500 8-3-3z" fill="#d23c26" /><path d="M5 17l4.500-6 3 3z" fill="#2c64a8" />
        </svg>
      </button>
      <button type="button" aria-label="Functions" className="flex size-8 items-center justify-center">
        <svg viewBox="0 0 22 22" className="size-[22px]">
          <path d="M6.500 1.500h9l5 5v14h-14z" fill="#edf7fe" stroke="#3d8ecf" />
          <path d="M15.500 1.500v5h5" fill="none" stroke="#3d8ecf" />
          <text x="2" y="16" fontSize="18" fontStyle="italic" fill="#1c4266" fontFamily="Liberation Serif">f</text>
          <text x="9" y="18" fontSize="14" fill="#1c4266" fontFamily="Liberation Serif">x</text>
        </svg>
      </button>
    </div>
  );
}

function StatusBar() {
  return (
    <div className="relative flex h-[22px] shrink-0 items-center bg-[#f6f6f6]">
      <span className="absolute top-[2px] left-[6px] flex h-5 w-[37px] items-center justify-center border border-[#767676] bg-white text-[#555]">Start</span>
      <span className="w-[324px] pl-[43px]">3 / 3</span>
      <span className="w-[302px] border-l border-[#aaa] pl-[5px]">Default</span>
      <span className="w-[54px] border-l border-[#aaa] text-center">INSRT</span>
      <span className="w-[34px] border-l border-[#aaa] text-center">STD</span>
      <span className="w-[46px] border-l border-[#aaa] pl-[5px]">*</span>
      <span className="flex-1 border-l border-[#aaa] text-center">Sum=0</span>
      <div className="flex w-[146px] shrink-0 items-center gap-2 border-l border-[#aaa] pl-[5px]">
        <svg viewBox="0 0 12 12" className="size-3"><circle cx="6" cy="6" r="5.300" fill="#d5ecfa" stroke="#35607f" /><path d="M3 6h6" stroke="#1d4f80" strokeWidth="1.300" /></svg>
        <input
          type="range"
          aria-label="Zoom"
          defaultValue={48}
          className="h-4 w-[102px] appearance-none bg-transparent bg-[linear-gradient(#888,#888)] bg-[length:100%_1px] bg-center bg-no-repeat [&::-webkit-slider-thumb]:size-2 [&::-webkit-slider-thumb]:appearance-none [&::-webkit-slider-thumb]:rounded-full [&::-webkit-slider-thumb]:border [&::-webkit-slider-thumb]:border-[#24475c] [&::-webkit-slider-thumb]:bg-[#4b8bb0]"
        />
        <svg viewBox="0 0 12 12" className="size-3"><circle cx="6" cy="6" r="5.300" fill="#d5ecfa" stroke="#35607f" /><path d="M3 6h6M6 3v6" stroke="#1d4f80" strokeWidth="1.300" /></svg>
      </div>
      <span className="ml-2 border-l border-[#aaa] pr-[10px] pl-1">100 %</span>
    </div>
  );
}

/* ---------- task bars ---------- */

const chrome = (
  <>
    <path d="M2.200 8A16 16 0 0 1 29.800 8H16A8 8 0 0 0 9 12z" fill="#e33b2e" />
    <path d="M2.200 8L9.100 20A8 8 0 0 0 19 23.500L14.500 32A16 16 0 0 1 2.200 8z" fill="#2da94f" />
    <path d="M16 8h13.800A16 16 0 0 1 14.500 32L23 20A8 8 0 0 0 16 8z" fill="#fdd663" />
    <circle cx="16" cy="16" r="7.800" fill="#fff" />
    <circle cx="16" cy="16" r="6" fill="#3b7ded" />
  </>
);

// App marks on a 32 x 32 board
const APPS: Record<string, ReactNode> = {
  Start: <path d="M4 7l10-1.500V15H4zM15.500 5.300L28 3.500V15H15.500zM4 16.500h10V26L4 24.500zM15.500 16.500H28V28l-12.500-1.800z" fill="currentColor" />,
  Search: <path d="M20 4a8 8 0 1 1-.1 0M14 18L4 28" fill="none" stroke="#fff" strokeWidth="2" />,
  Cortana: <circle cx="16" cy="16" r="9.500" fill="none" stroke="#fff" strokeWidth="3" />,
  'Task View': (
    <>
      <path d="M4 4v3h16V4M4 28v-3h16v3M4 10.500h16v11H4z" fill="none" stroke="#fff" strokeWidth="2" />
      <path d="M26 4v4M26 17v11" stroke="#fff" strokeWidth="2" /><path d="M24 11h4v4h-4z" fill="#fff" />
    </>
  ),
  Explorer: (
    <>
      <path d="M1 4h11l2 3h17v21H1z" fill="#e8a91f" />
      <path d="M1 9h30v19H1z" fill="#fbdc7a" />
      <path d="M7 30V18h18v12h-5v-6h-8v6z" fill="#3e95dc" />
    </>
  ),
  'Internet Explorer': (
    <>
      <path d="M30 19H12a5.500 5.500 0 0 0 10 3h7.500A13.500 13.500 0 1 1 30 19zM12 14h11.500a5.500 5.500 0 0 0-11.500 0z" fill="#5cc3f4" />
      <path d="M2 31Q-3 22 9 10T30 2q3 3-1 8 0-6-4-5Q17 6 10 14T5 28q3 1 7-2-6 7-10 5z" fill="#f7cf3a" />
    </>
  ),
  Firefox: (
    <>
      <path d="M16 31A15 15 0 0 1 3 10l2-6 4 4 6-1 5-6q2 4 6 6 5 5 5 11a15 15 0 0 1-15 13z" fill="#ff6a2b" />
      <path d="M22 4q9 6 8 14-1 8-8 12 5-8 2-14l-6-7z" fill="#ffcf3e" />
      <path d="M2 18q4 5 10 6t12-1q-3 7-9 7.500Q4 30 2 18z" fill="#f2305c" />
      <circle cx="17" cy="18" r="6" fill="#7b3fd0" />
      <path d="M6 11l7 1 5 2-5 3-5-1z" fill="#ffb02e" />
    </>
  ),
  Chrome: chrome,
  PowerShell: (
    <>
      <path d="M6 4h26l-6 24H0z" fill="#3a6fd0" />
      <path d="M9 9l8 7-10 8M17 24h8" fill="none" stroke="#fff" strokeWidth="2.800" />
    </>
  ),
  'Command Prompt': (
    <>
      <path d="M1 3h30v25H1z" fill="#0b0b0b" stroke="#bbb" strokeWidth="1.500" />
      <path d="M1 3h30v3H1z" fill="#d8d8d8" />
      <text x="4" y="15" fontSize="8" fontWeight="700" fill="#eee" fontFamily="Liberation Mono">C:\_</text>
    </>
  ),
  Thunderbird: (
    <>
      <circle cx="16" cy="16" r="15.500" fill="#1f5fa8" />
      <path d="M9 2Q20-2 28 6t1 20q1-12-8-17Q15 5 6 8q0-4 3-6z" fill="#4f9fe6" />
      <path d="M1 14q3-5 9-4l14 1 2 8-6 10q-9 2-14-5z" fill="#f4f7fa" />
      <path d="M3 12l11 8 11-6M14 20l6 9" fill="none" stroke="#9fb6cc" strokeWidth="1.500" />
    </>
  ),
  'OpenOffice Calc': (
    <>
      <path d="M13 8h13l5 5v18H13z" fill="#f1f3f3" /><path d="M6 10h8v21H7z" fill="#2c4757" />
      <path d="M1 6Q10-1 17 4q6-4 10 1-6-1-9 3-7-4-17-2zM0 12q8-5 15-2 4-2 8 0-5 0-8 3-6-3-15-1z" fill="#e6eef0" stroke="#333" />
      <path d="M16 15h12v11H16zM22 15v11M16 20.500h12" fill="#f3fadf" stroke="#81b51f" strokeWidth="2" />
    </>
  ),
  Store: (
    <>
      <path d="M10 8V2.500h12V8" fill="none" stroke="#2bb3ea" strokeWidth="2.500" />
      <path d="M1 7h30v20q0 4-4 4H5q-4 0-4-4z" fill="#f3f3f3" />
      <path d="M10 13h5.500v5.500H10z" fill="#f25022" /><path d="M17 13h5.500v5.500H17z" fill="#7fba00" />
      <path d="M10 20h5.500v5.500H10z" fill="#00a4ef" /><path d="M17 20h5.500v5.500H17z" fill="#ffb900" />
    </>
  ),
  Edge: (
    <>
      <circle cx="16" cy="16" r="15.500" fill="#1a86d6" />
      <path d="M1 14Q4 0 17 .5 31 2 31.500 14q0 7-8 7-5 0-5-3 3-5-2-7-8-3-15.500 3z" fill="#4bcf9e" />
      <path d="M1 14Q4 0 17 .5q6 0 9 4-12-3-25 9.500z" fill="#2fb4dc" />
      <path d="M12 14q-3 12 7 14 6 0 9-3-5 7-13 6.500Q5 28 7 18q1-3 5-4z" fill="#114a8b" />
      <path d="M18 18q0 3 5 3 6 0 8-4-1 7-7 8-8 0-9-7 2-3 3 0z" fill="#101010" />
    </>
  ),
  Mail: (
    <>
      <path d="M1 11L16 1l15 10v19H1z" fill="#1265b5" />
      <path d="M3 11h26v10H3z" fill="#f4f4f4" />
      <path d="M1 11l15 11L1 30z" fill="#1f9be6" /><path d="M31 11L7 30h24z" fill="#39b5f2" /><path d="M1 30l8-12 7 5z" fill="#2ba4ea" />
    </>
  ),
  Gears: (
    <>
      <circle cx="16" cy="16" r="15" fill="none" stroke="#d6222a" strokeWidth="1.600" />
      <circle cx="14" cy="17" r="6" fill="none" stroke="#ec2a30" strokeWidth="3" strokeDasharray="3 1.700" />
      <circle cx="14" cy="17" r="3.800" fill="none" stroke="#ec2a30" strokeWidth="2.800" />
      <circle cx="23" cy="12" r="2.500" fill="#ec2a30" stroke="#ec2a30" strokeWidth="2.500" strokeDasharray="2 1" />
      <path d="M20 14l5 0-3 7z" fill="#ec2a30" />
    </>
  ),
  'Chrome profile': (
    <>
      {chrome}
      <circle cx="24" cy="24" r="10.500" fill="#5c4038" />
      <text x="19.500" y="28" fontSize="11" fontWeight="700" fill="#eee" fontFamily="Roboto">M</text>
    </>
  ),
};

function AppIcon({ n, s = 'size-[22px]' }: { n: string; s?: string }) {
  return <svg viewBox="0 0 32 32" className={`${s} overflow-visible`} aria-hidden="true">{APPS[n]}</svg>;
}

const guestApps = ['Start', 'Search', 'Task View', 'Explorer', 'Internet Explorer', 'Firefox', 'Chrome', 'PowerShell', 'Command Prompt', 'Thunderbird', 'OpenOffice Calc'];

function GuestTaskbar() {
  return (
    <div className="flex h-10 shrink-0 bg-black text-white">
      {guestApps.map((n) => (
        <button
          key={n}
          type="button"
          aria-label={n}
          className={`flex w-[49px] items-center justify-center border-b-2 ${n === 'Start' ? 'border-transparent bg-[#1a1a1a] text-[#4aa3e8]' : n === 'OpenOffice Calc' ? 'border-[#76b9ed] bg-[#333]' : 'border-transparent'}`}
        >
          <AppIcon n={n} />
        </button>
      ))}
      <div className="ml-auto flex items-center">
        <ChevronDown className="size-4 rotate-180" />
        <svg viewBox="0 0 18 16" className="ml-8 h-4 w-[18px]">
          <path d="M5 2.500h11v8H5zM1 .5h4v4H1zM2.500 5v9h7" fill="none" stroke="#fff" />
          <path d="M13 5l5 10H8z" fill="#f6b81f" /><path d="M13 8.500v3M13 12.500v1" stroke="#000" />
        </svg>
        <p className="mb-[2px] ml-[9px] w-[54px] text-center leading-[18px]">9:54 AM 5/28/2022</p>
        <svg viewBox="0 0 18 18" className="ml-4 size-[18px]"><path d="M1 1.500h15v12h-5l-2.500 3-2.500-3H1z" fill="none" stroke="#fff" strokeWidth="1.200" /></svg>
        <span className="ml-[19px] h-full w-[5px] border-l border-[#555]" />
      </div>
    </div>
  );
}

function HostTaskbar() {
  return (
    <footer className="flex h-10 shrink-0 bg-[#101010] font-['Open_Sans',sans-serif] text-[11px] text-white">
      <div className="flex gap-1">
        {['Start', 'Search', 'Cortana', 'Task View'].map((n) => (
          <button key={n} type="button" aria-label={n} className="flex w-11 items-center justify-center"><AppIcon n={n} s="size-5" /></button>
        ))}
      </div>
      <div className="ml-[5px] flex gap-1">
        {['Explorer', 'Store', 'Edge', 'Mail', 'Gears', 'Chrome profile'].map((n) => (
          <button
            key={n}
            type="button"
            aria-label={n}
            className={`flex w-[45px] items-center justify-center border-b-2 ${n === 'Chrome profile' ? 'border-[#76b9ed] bg-[#333]' : 'border-transparent'}`}
          >
            <AppIcon n={n} s="size-[23px]" />
          </button>
        ))}
      </div>
      <p className="mt-px mr-[6px] ml-auto w-[54px] text-right leading-[18px]">12:54 PM 5/28/2022</p>
    </footer>
  );
}

export default function App() {
  return (
    <div className="flex h-screen flex-col overflow-hidden bg-[#f7f7f7] font-[Roboto,sans-serif]">
      <Header />
      <div className="flex min-h-0 flex-1">
        <LabGuide />
        <main className="flex min-w-0 flex-1 flex-col font-['Open_Sans',sans-serif] text-[11px] leading-4 text-black">
          <TitleAndMenu />
          <div className="shrink-0 bg-white"><Toolbars /></div>
          <div className="flex min-h-0 flex-1">
            <SheetArea />
            <div className="flex w-[6px] flex-col items-center justify-center"><span className="h-8 border-l-2 border-dotted border-[#777]" /></div>
            <div className="flex w-[276px] shrink-0 border border-[#999] bg-[#f7f7f7]">
              <Properties />
              <SidebarTabs />
            </div>
          </div>
          <StatusBar />
          <GuestTaskbar />
        </main>
      </div>
      <HostTaskbar />
    </div>
  );
}
